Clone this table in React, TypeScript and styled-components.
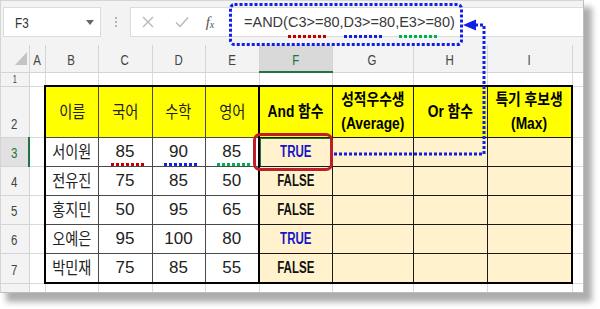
import React from 'react';
import styled, { createGlobalStyle, css } from 'styled-components';

const GlobalStyle = createGlobalStyle`
  html, body {
    margin: 0;
    padding: 0;
    background: #ffffff;
  }
  body {
    font-family: "Liberation Sans", "Noto Sans CJK KR", sans-serif;
  }
`;

const BLUE = '#1020e6';
const GREEN = '#217346';

// the reference is a squeezed screenshot, so text is narrowed a bit
const squeeze = (k: number) => css`
  display: inline-block;
  transform: scaleX(${k});
  white-space: nowrap;
`;

const Stage = styled.div`
  position: relative;
  width: 600px;
  height: 309px;
  overflow: hidden;
`;

const Window = styled.div`
  width: 584px;
  height: 293px;
  box-sizing: border-box;
  background: #ffffff;
  border: 1px solid #d4d4d4;
  border-right-color: #bdbdbd;
  border-bottom-color: #bdbdbd;
  box-shadow: 7px 8px 6px 1px rgba(0, 0, 0, 0.32);
  overflow: hidden;
  display: flex;
  flex-direction: column;
`;

/* ---------- formula bar ---------- */

const FormulaBar = styled.div`
  height: 44px;
  flex-shrink: 0;
  box-sizing: border-box;
  padding: 6px 0 0 2px;
  background: #f3f3f3;
  display: flex;
  align-items: flex-start;
`;

const NameBox = styled.div`
  width: 98px;
  height: 30px;
  box-sizing: border-box;
  background: #ffffff;
  border: 1px solid #dcdcdc;
  display: flex;
  align-items: center;
  justify-content: space-between;
  padding: 0 6px 0 11px;
  font-size: 15px;
  color: #333;

  span {
    ${squeeze(0.78)};
    transform-origin: left center;
  }
`;

const DropArrow = styled.i`
  width: 0;
  height: 0;
  border-left: 4px solid transparent;
  border-right: 4px solid transparent;
  border-top: 5px solid #666;
`;

const Grip = styled.div`
  width: 29px;
  height: 30px;
  display: flex;
  flex-direction: column;
  align-items: center;
  justify-content: center;
  gap: 2px;

  i {
    width: 2px;
    height: 2px;
    background: #b3b3b3;
  }
`;

const FormulaBox = styled.div`
  flex: 1;
  height: 30px;
  box-sizing: border-box;
  background: #ffffff;
  border: 1px solid #dcdcdc;
  border-right: none;
  display: flex;
  align-items: center;
`;

const ToolButton = styled.div<{ $w: number }>`
  width: ${p => p.$w}px;
  height: 100%;
  display: flex;
  align-items: center;
  justify-content: center;
`;

const Fx = styled.span`
  font-family: "Liberation Serif", serif;
  font-style: italic;
  font-size: 15px;
  color: #555;

  sub {
    font-size: 10px;
    vertical-align: -1px;
  }
`;

const FormulaText = styled.div`
  flex: 1;
  height: 100%;
  border-left: 1px solid #e6e6e6;
  margin-left: 10px;
  padding-left: 12px;
  display: flex;
  align-items: center;
  font-family: "Liberation Sans", sans-serif;
  font-size: 14.5px;
  color: #3a3a3a;
  white-space: pre;
`;

const Dotted = styled.span<{ $color: string; $w?: number; $gap?: number; $l?: number }>`
  position: relative;
  display: inline-block;
  line-height: 16px;

  &::after {
    content: '';
    position: absolute;
    left: ${p => p.$l ?? 0}px;
    width: ${p => p.$w ?? 40}px;
    bottom: -${p => p.$gap ?? 8}px;
    height: 3px;
    background: repeating-linear-gradient(
      90deg,
      ${p => p.$color} 0 3px,
      transparent 3px 5px
    );
  }
`;

/* ---------- sheet ---------- */

const Sheet = styled.table`
  width: 582px;
  border-collapse: collapse;
  table-layout: fixed;
  font-size: 16px;
  color: #222;
`;

const Row = styled.tr<{ $h: number }>`
  height: ${p => p.$h}px;
`;

const ColHead = styled.th<{ $active?: boolean }>`
  padding: 3px 0 0;
  font-weight: 400;
  font-size: 15.5px;
  color: ${p => (p.$active ? GREEN : '#444')};
  background: ${p => (p.$active ? '#d9d9d9' : '#f3f3f3')};
  border-right: 1px solid #d4d4d4;
  border-bottom: ${p => (p.$active ? `2px solid ${GREEN}` : '1px solid #d4d4d4')};

  span {
    ${squeeze(0.74)};
  }
`;

const Corner = styled.th`
  padding: 0;
  background: #f3f3f3;
  border-right: 1px solid #d4d4d4;
  border-bottom: 1px solid #d4d4d4;
  vertical-align: bottom;
  text-align: right;

  i {
    display: inline-block;
    width: 0;
    height: 0;
    margin: 0 2px 3px 0;
    border-left: 12px solid transparent;
    border-bottom: 13px solid #c4c4c4;
  }
`;

const RowHead = styled.th<{ $active?: boolean; $small?: boolean }>`
  padding: 0 0 ${p => (p.$small ? 0 : 4)}px;
  font-weight: 400;
  font-size: ${p => (p.$small ? 10 : 15.5)}px;
  line-height: ${p => (p.$small ? 12 : 18)}px;
  color: ${p => (p.$active ? GREEN : '#444')};
  background: ${p => (p.$active ? '#e1e1e1' : '#f3f3f3')};
  border-right: ${p => (p.$active ? `2px solid ${GREEN}` : '1px solid #d4d4d4')};
  border-bottom: 1px solid #d4d4d4;
  vertical-align: bottom;

  span {
    ${squeeze(0.74)};
  }
`;

const Grid = styled.td`
  padding: 0;
  border: 1px solid #dadada;
`;

type Tone = 'head' | 'plain' | 'calc';

const toneBg: Record<Tone, string> = {
  head: '#ffff00',
  plain: '#ffffff',
  calc: '#fff2cc',
};

const Cell = styled.td<{
  $tone: Tone;
  $l?: boolean;
  $r?: boolean;
  $t?: boolean;
  $b?: boolean;
  $dark?: boolean;
  $active?: boolean;
}>`
  padding: 0;
  text-align: center;
  vertical-align: middle;
  background: ${p => toneBg[p.$tone]};
  border: 1px solid ${p => (p.$dark ? '#1a1a1a' : '#4a4a4a')};
  ${p => p.$l && 'border-left: 2px solid #000;'}
  ${p => p.$r && 'border-right: 2px solid #000;'}
  ${p => p.$t && 'border-top: 2px solid #000;'}
  ${p => p.$b && 'border-bottom: 2px solid #000;'}
  ${p => p.$active && `box-shadow: inset 1px 1px 0 ${GREEN};`}
`;

const HeadLabel = styled.span<{ $bold?: boolean }>`
  ${squeeze(0.86)};
  font-family: "Liberation Sans", "Noto Sans CJK KR", sans-serif;
  font-weight: ${p => (p.$bold ? 700 : 400)};
  font-size: ${p => (p.$bold ? 16 : 16.5)}px;
  line-height: 24px;
  color: ${p => (p.$bold ? '#000' : '#222')};
  white-space: pre-line;
`;

const Name = styled.span`
  ${squeeze(0.86)};
  font-family: "Noto Sans CJK KR", sans-serif;
  font-size: 16.5px;
  line-height: 18px;
`;

const Score = styled.span`
  display: inline-block;
  font-size: 17px;
  line-height: 16px;
  color: #222;
`;

const Result = styled.span<{ $on: boolean }>`
  ${squeeze(0.72)};
  font-size: 16px;
  font-weight: 700;
  color: ${p => (p.$on ? '#1414c8' : '#111')};
`;

/* ---------- annotations laid over the sheet ---------- */

const Overlay = styled.svg`
  position: absolute;
  left: 0;
  top: 0;
  pointer-events: none;
`;

const Highlight = styled.div`
  position: absolute;
  left: 253px;
  top: 133px;
  width: 80px;
  height: 38px;
  box-sizing: border-box;
  border: 3px solid #bd1f26;
  border-radius: 7px;
  pointer-events: none;
`;

const columns = [
  { key: '', w: 28 },
  { key: 'A', w: 16 },
  { key: 'B', w: 53 },
  { key: 'C', w: 54 },
  { key: 'D', w: 53 },
  { key: 'E', w: 54 },
  { key: 'F', w: 73 },
  { key: 'G', w: 81 },
  { key: 'H', w: 74 },
  { key: 'I', w: 85 },
  { key: ' ', w: 11 },
];

const students = [
  { name: '서이원', kor: 85, math: 90, eng: 85, and: true },
  { name: '전유진', kor: 75, math: 85, eng: 50, and: false },
  { name: '홍지민', kor: 50, math: 95, eng: 65, and: false },
  { name: '오예은', kor: 95, math: 100, eng: 80, and: true },
  { name: '박민재', kor: 75, math: 85, eng: 55, and: false },
];

const marks = ['#c00000', BLUE, '#00b050'];

const App: React.FC = () => {
  return (
    <>
      <GlobalStyle />
      <Stage>
        <Window>
          <FormulaBar>
            <NameBox>
              <span>F3</span>
              <DropArrow />
            </NameBox>
            <Grip>
              <i />
              <i />
              <i />
            </Grip>
            <FormulaBox>
              <ToolButton $w={34}>
                <svg width="12" height="12" viewBox="0 0 12 12">
                  <path d="M1 1 L11 11 M11 1 L1 11" stroke="#b8b8b8" strokeWidth="1.4" fill="none" />
                </svg>
              </ToolButton>
              <ToolButton $w={34}>
                <svg width="14" height="12" viewBox="0 0 14 12">
                  <path d="M1 6.5 L5 10.5 L13 1.5" stroke="#b8b8b8" strokeWidth="1.4" fill="none" />
                </svg>
              </ToolButton>
              <ToolButton $w={22}>
                <Fx>
                  f<sub>x</sub>
                </Fx>
              </ToolButton>
              <FormulaText>
                =AND(<Dotted $color={marks[0]}>C3&gt;=80</Dotted>,<Dotted $color={marks[1]}>D3&gt;=80</Dotted>,<Dotted $color={marks[2]}>E3&gt;=80</Dotted>)
              </FormulaText>
            </FormulaBox>
          </FormulaBar>

          <Sheet>
            <colgroup>
              {columns.map((c, i) => (
                <col key={i} style={{ width: c.w }} />
              ))}
            </colgroup>
            <tbody>
              <Row $h={27}>
                <Corner>
                  <i />
                </Corner>
                {columns.slice(1).map((c, i) => (
                  <ColHead key={i} $active={c.key === 'F'}>
                    <span>{c.key.trim()}</span>
                  </ColHead>
                ))}
              </Row>

              <Row $h={14}>
                <RowHead $small>
                  <span>1</span>
                </RowHead>
                {columns.slice(1).map((_, i) => (
                  <Grid key={i} />
                ))}
              </Row>

              <Row $h={51}>
                <RowHead>
                  <span>2</span>
                </RowHead>
                <Grid />
                <Cell $tone="head" $l $t>
                  <HeadLabel>이름</HeadLabel>
                </Cell>
                <Cell $tone="head" $t>
                  <HeadLabel>국어</HeadLabel>
                </Cell>
                <Cell $tone="head" $t>
                  <HeadLabel>수학</HeadLabel>
                </Cell>
                <Cell $tone="head" $t>
                  <HeadLabel>영어</HeadLabel>
                </Cell>
                <Cell $tone="head" $l $t $dark>
                  <HeadLabel $bold>And 함수</HeadLabel>
                </Cell>
                <Cell $tone="head" $t $dark>
                  <HeadLabel $bold>{'성적우수생\n(Average)'}</HeadLabel>
                </Cell>
                <Cell $tone="head" $t $dark>
                  <HeadLabel $bold>Or 함수</HeadLabel>
                </Cell>
                <Cell $tone="head" $t $r $dark>
                  <HeadLabel $bold>{'특기 후보생\n(Max)'}</HeadLabel>
                </Cell>
                <Grid />
              </Row>

              {students.map((s, i) => {
                const first = i === 0;
                const last = i === students.length - 1;
                const scores = [s.kor, s.math, s.eng];
                return (
                  <Row key={s.name} $h={last ? 30 : 29}>
                    <RowHead $active={first}>
                      <span>{i + 3}</span>
                    </RowHead>
                    <Grid />
                    <Cell $tone="plain" $l $b={last}>
                      <Name>{s.name}</Name>
                    </Cell>
                    {scores.map((v, j) => (
                      <Cell key={j} $tone="plain" $b={last}>
                        {first ? (
                          <Dotted $color={marks[j]} $l={-5} $w={34} $gap={6}>
                            <Score>{v}</Score>
                          </Dotted>
                        ) : (
                          <Score>{v}</Score>
                        )}
                      </Cell>
                    ))}
                    <Cell $tone="calc" $l $b={last} $dark $active={first}>
                      <Result $on={s.and}>{s.and ? 'TRUE' : 'FALSE'}</Result>
                    </Cell>
                    <Cell $tone="calc" $b={last} $dark />
                    <Cell $tone="calc" $b={last} $dark />
                    <Cell $tone="calc" $r $b={last} $dark />
                    <Grid />
                  </Row>
                );
              })}

              <Row $h={9}>
                <RowHead>
                  <span />
                </RowHead>
                {columns.slice(1).map((_, i) => (
                  <Grid key={i} />
                ))}
              </Row>
            </tbody>
          </Sheet>
        </Window>

        <Highlight />

        <Overlay width="600" height="309" viewBox="0 0 600 309">
          <rect
            x="230.5"
            y="4.5"
            width="231"
            height="40"
            rx="4"
            fill="none"
            stroke={BLUE}
            strokeWidth="3"
            strokeDasharray="3 2"
          />
          <polyline
            points="334,154 484,154 484,25 475,25"
            fill="none"
            stroke={BLUE}
            strokeWidth="3"
            strokeDasharray="3 2"
          />
          <polygon points="463,25 476,19.5 476,30.5" fill={BLUE} />
        </Overlay>
      </Stage>
    </>
  );
};

export default App;
